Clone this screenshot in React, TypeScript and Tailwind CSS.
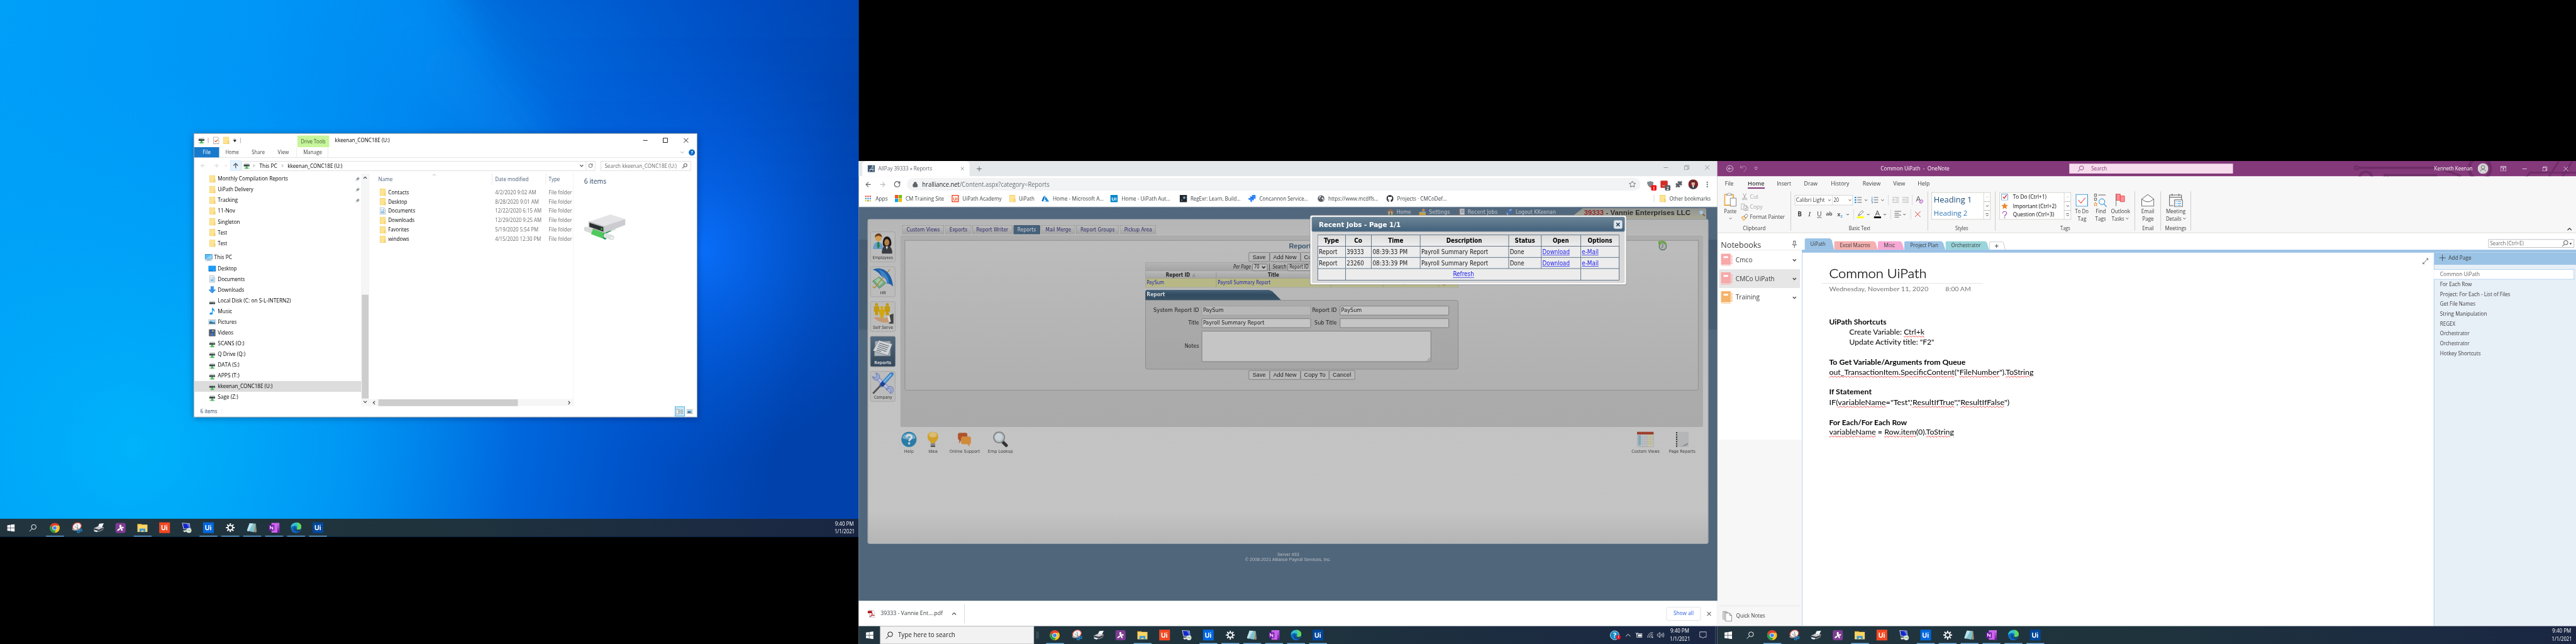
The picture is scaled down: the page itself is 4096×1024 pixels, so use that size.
import React, { useLayoutEffect, useRef, useState } from "react";
import { RotateCw, ArrowLeft, ArrowRight, Star, Puzzle, MoreVertical, Lock, Plus, X } from "lucide-react";
import { FaGithub } from "react-icons/fa";

type P = { children?: React.ReactNode; className?: string };

/** One line of text set to an exact advance width. */
function T({ w, className = "", link = false, children }: P & { w: number; link?: boolean }) {
  const outer = useRef<HTMLSpanElement>(null);
  const inner = useRef<HTMLSpanElement>(null);
  const [k, setK] = useState(1);
  useLayoutEffect(() => {
    if (outer.current && inner.current) {
      const a = outer.current.getBoundingClientRect().width;
      const b = inner.current.getBoundingClientRect().width;
      if (b > 0) setK(a / b);
    }
  }, []);
  return (
    <span ref={outer} className={"block shrink-0 whitespace-nowrap " + className} style={{ width: w }}>
      <span
        ref={inner}
        className={"inline-block origin-left whitespace-nowrap " + (link ? "text-[#1a1aee] underline decoration-1 underline-offset-[2px]" : "")}
        style={{ transform: `scaleX(${k})` }}
      >
        {children}
      </span>
    </span>
  );
}

function Chev({ className = "", w = 8, dir = "down", sw = 1.4 }: { className?: string; w?: number; dir?: "down" | "up" | "left" | "right"; sw?: number }) {
  const d = { down: "M1 3l4 4 4-4", up: "M1 7l4-4 4 4", left: "M7 1L3 5l4 4", right: "M3 1l4 4-4 4" }[dir];
  return (
    <svg width={w} height={w} viewBox="0 0 10 10" fill="none" stroke="currentColor" strokeWidth={sw} className={"shrink-0 " + className}>
      <path d={d} />
    </svg>
  );
}

/* ---------- Explorer icons ---------- */
function Folder({ className = "" }: P) {
  return (
    <svg width="14" height="16" viewBox="0 0 14 16" className={"shrink-0 " + className}>
      <rect x="0.5" y="0.5" width="12" height="15" fill="#ffe494" stroke="#f0c850" />
      <rect x="10.5" y="10" width="3" height="5.5" fill="#ffe9a2" stroke="#e3b63f" strokeWidth="0.8" />
    </svg>
  );
}
function NetDrive({ className = "" }: P) {
  return (
    <svg width="15" height="14" viewBox="0 0 15 14" className={"shrink-0 " + className}>
      <path d="M2 1h11l1 3H1z" fill="#cfd4d6" />
      <rect x="1" y="4" width="13" height="4" fill="#3c4247" />
      <rect x="10" y="5.3" width="2" height="1.2" fill="#48e06a" />
      <rect x="5.5" y="8" width="4" height="3" fill="#3fae4c" />
      <rect x="1" y="11" width="13" height="2.4" fill="#c9cfd0" />
      <rect x="4" y="10.5" width="7" height="3.2" fill="#4cc15a" />
    </svg>
  );
}
function DocIcon({ className = "" }: P) {
  return (
    <svg width="13" height="16" viewBox="0 0 13 16" className={"shrink-0 " + className}>
      <path d="M.5.5h9l3 3v12H.5z" fill="#fff" stroke="#8b8f93" />
      <path d="M2.5 5h3M7 4h3M7 6h3.5M2.5 8.5h8M2.5 10.5h8M2.5 12.5h8" stroke="#2f8fd5" />
    </svg>
  );
}
function SideIcon({ kind }: { kind: string }) {
  switch (kind) {
    case "folder":
      return <Folder />;
    case "doc":
      return <DocIcon />;
    case "drive":
      return <NetDrive className="mt-1" />;
    case "pc":
      return (
        <svg width="17" height="16" viewBox="0 0 17 16">
          <rect x="0.5" y="0.5" width="16" height="11" fill="#58bdf7" stroke="#3b6f92" />
          <path d="M1 11L16 1v10z" fill="#8fd6fb" />
          <path d="M5 13h7M1 15.2h15" stroke="#7f97a8" />
        </svg>
      );
    case "desktop":
      return (
        <svg width="17" height="13" viewBox="0 0 17 13">
          <rect x="0.5" y="0.5" width="16" height="12" fill="#1a9dfb" stroke="#0f74c4" />
          <path d="M1 11.5h15" stroke="#0a5c9e" />
          <path d="M11 11h1M13 11h1" stroke="#fff" />
        </svg>
      );
    case "down":
      return (
        <svg width="17" height="16" viewBox="0 0 17 16">
          <path d="M5.5.5h6V8h4.7L8.5 15.6.8 8h4.7z" fill="#3597ee" stroke="#1f78ca" strokeWidth="0.7" />
        </svg>
      );
    case "disk":
      return (
        <svg width="15" height="9" viewBox="0 0 15 9" className="mt-2">
          <path d="M2 1h11l1 3H1z" fill="#cfd4d6" />
          <rect x="1" y="4" width="13" height="4" fill="#3c4247" />
          <rect x="10" y="5.3" width="2" height="1.2" fill="#48e06a" />
        </svg>
      );
    case "music":
      return (
        <svg width="13" height="16" viewBox="0 0 13 16">
          <path d="M6 0h1.6c.4 3 4.6 3.8 4.4 7.5-.1 1-.5 2-1 2.5.4-2.5-1.5-4-3.4-4.6V13c0 4-7.4 3.8-7 .4C1 11.3 4 10.6 6 11.3z" fill="#1294ea" />
        </svg>
      );
    case "pic":
      return (
        <svg width="17" height="12" viewBox="0 0 17 12">
          <rect x="0.5" y="0.5" width="16" height="11" fill="#fff" stroke="#8b8f93" />
          <rect x="2" y="2" width="13" height="8" fill="#8ecdf3" />
          <path d="M2 5c4-1 8 3 13 2v3H2z" fill="#2f6f87" />
        </svg>
      );
    default:
      return (
        <svg width="15" height="16" viewBox="0 0 15 16">
          <rect width="15" height="16" fill="#3c4043" />
          <path d="M1.5 1v14M13.5 1v14" stroke="#fff" strokeDasharray="1.2 1.2" />
          <rect x="3" y="1.5" width="9" height="6" fill="#2c5fb8" />
          <rect x="3" y="8.5" width="9" height="6" fill="#2d7fd0" />
          <circle cx="9" cy="4" r="1.8" fill="#e8b73a" />
          <path d="M3.5 12l3-3 2 3z" fill="#d6412c" />
        </svg>
      );
  }
}

const sideItems: { k: string; t: string; w: number; pin?: boolean; top?: boolean; sel?: boolean }[] = [
  { k: "folder", t: "Monthly Compilation Reports", w: 157, pin: true },
  { k: "folder", t: "UiPath Delivery", w: 79.5, pin: true },
  { k: "folder", t: "Tracking", w: 44.6, pin: true },
  { k: "folder", t: "11-Nov", w: 39 },
  { k: "folder", t: "Singleton", w: 49.5 },
  { k: "folder", t: "Test", w: 21 },
  { k: "folder", t: "Test", w: 21 },
  { k: "pc", t: "This PC", w: 40, top: true },
  { k: "desktop", t: "Desktop", w: 42.5 },
  { k: "doc", t: "Documents", w: 60.6 },
  { k: "down", t: "Downloads", w: 59 },
  { k: "disk", t: "Local Disk (C: on S-L-INTERN2)", w: 163.5 },
  { k: "music", t: "Music", w: 32 },
  { k: "pic", t: "Pictures", w: 42 },
  { k: "video", t: "Videos", w: 35 },
  { k: "drive", t: "SCANS (O:)", w: 59.5 },
  { k: "drive", t: "Q Drive (Q:)", w: 61.5 },
  { k: "drive", t: "DATA (S:)", w: 48.5 },
  { k: "drive", t: "APPS (T:)", w: 48.5 },
  { k: "drive", t: "kkeenan_CONC18E (U:)", w: 122.5, sel: true },
  { k: "drive", t: "Sage (Z:)", w: 45.5 },
];

const files = [
  { t: "Contacts", w: 46.7, d: "4/2/2020 9:02 AM", dw: 92 },
  { t: "Desktop", w: 42.5, d: "8/28/2020 9:01 AM", dw: 98 },
  { t: "Documents", w: 60.5, d: "12/22/2020 6:15 AM", dw: 104, doc: true },
  { t: "Downloads", w: 59, d: "12/29/2020 9:25 AM", dw: 104 },
  { t: "Favorites", w: 46.5, d: "5/19/2020 5:54 PM", dw: 97 },
  { t: "windows", w: 47, d: "4/15/2020 12:30 PM", dw: 103 },
];

function BigDrive() {
  return (
    <svg width="96" height="60" viewBox="0 0 96 60">
      <path d="M4 33l14 5" stroke="#d6dad9" strokeWidth="10" strokeLinecap="round" />
      <path d="M48 40l20-10" stroke="#1e8e4e" strokeWidth="7" />
      <path d="M60 36l10-4" stroke="#e1e3e3" strokeWidth="6" />
      <path d="M18 38l30 11" stroke="#4fc95b" strokeWidth="14" />
      <ellipse cx="47" cy="49" rx="4.5" ry="7.5" fill="#16875a" />
      <path d="M49 48l13 4" stroke="#dfe3e2" strokeWidth="11" strokeLinecap="round" />
      <circle cx="62" cy="53" r="3.8" fill="#f3f5f4" stroke="#c3c6c6" />
      <path d="M11 17L59 1l33 10v12L45 41z" fill="#d9dadc" />
      <path d="M11 17L59 1l33 10-47 16z" fill="#e4e4e7" />
      <path d="M45 27l47-16v13L45 42z" fill="#cbccd0" />
      <path d="M10 16l35 11v15L10 29z" fill="#b9babd" />
      <path d="M12 19l31 10v10L12 28z" fill="#2d3032" />
      <circle cx="39" cy="33" r="2" fill="#24d31d" />
    </svg>
  );
}

function Explorer() {
  return (
    <div className="absolute top-[298px] left-[433px] flex h-[635px] w-[1126px] flex-col border border-[#7d8790] bg-white font-['Open_Sans','Noto_Sans',sans-serif] text-[11.5px] leading-none text-black shadow-[0_2px_14px_rgba(0,0,40,0.35)]">
      <div className="flex h-[30px] items-center">
        <NetDrive className="ml-[9px]" />
        <div className="ml-[7px] h-3 w-px bg-[#8a8a8a]" />
        <svg width="13" height="16" viewBox="0 0 13 16" className="ml-[11px]">
          <path d="M.5.5h9l3 3v12H.5z" fill="#fff" stroke="#777" />
          <path d="M3 8.5l2.5 2.5 4.5-5" stroke="#e2571e" strokeWidth="1.8" fill="none" />
        </svg>
        <Folder className="ml-[9px]" />
        <svg width="8" height="8" viewBox="0 0 8 8" className="ml-2">
          <path d="M1 1h6M1 3.5h6L4 7z" stroke="#000" strokeWidth="0.8" />
        </svg>
        <div className="ml-2 h-3 w-px bg-[#8a8a8a]" />
        <div className="mt-[4px] ml-[127px] flex h-[26px] w-[71px] items-center justify-center bg-[#c6f59b] text-[#3d5a28]">
          <T w={55}>Drive Tools</T>
        </div>
        <T w={122.5} className="ml-[13px]">kkeenan_CONC18E (U:)</T>
        <svg width="110" height="12" viewBox="0 0 110 12" className="mr-[16px] ml-auto" fill="none" stroke="#000" strokeWidth="1.2">
          <path d="M6 6h10M97 1l10 10M107 1L97 11" />
          <rect x="51" y="1" width="9.5" height="9.5" />
        </svg>
      </div>
      <div className="flex h-[24px] items-center border-b border-[#dadbdc] text-[#444]">
        <div className="flex h-[23px] w-[56px] items-center justify-center bg-[#1979ca] text-white">
          <T w={18}>File</T>
        </div>
        <T w={30} className="ml-[14px]">Home</T>
        <T w={29} className="ml-[29px]">Share</T>
        <T w={25} className="ml-[29px]">View</T>
        <div className="ml-[17px] flex h-[23px] w-[71px] items-center justify-center border-x border-[#e2e3e4]">
          <T w={42}>Manage</T>
        </div>
        <Chev className="ml-auto text-[#9a9a9a]" w={9} />
        <div className="mr-1 ml-[10px] flex h-[14px] w-[14px] items-center justify-center rounded-full bg-[#0a68c4] text-[10px] font-bold text-white">?</div>
      </div>
      <div className="flex h-[35px] items-center">
        <ArrowLeft size={13} color="#c4c4c4" className="ml-[13px]" />
        <ArrowRight size={13} color="#c4c4c4" className="ml-[17px]" />
        <Chev className="ml-[12px] text-[#c4c4c4]" w={7} />
        <div className="ml-[6px] flex h-[23px] w-[24px] items-center justify-center border border-[#cce8ff] bg-[#e5f3ff]">
          <svg width="12" height="13" viewBox="0 0 12 13" fill="none" stroke="#555" strokeWidth="1.8">
            <path d="M6 12V1.5M1 6.5l5-5 5 5" />
          </svg>
        </div>
        <div className="ml-[1px] flex h-[22px] w-[791px] items-center border border-[#d4d4d4]">
          <NetDrive className="ml-[3px]" />
          <Chev dir="right" w={7} className="ml-[5px] text-[#555]" />
          <T w={40} className="ml-[9px]">This PC</T>
          <Chev dir="right" w={7} className="ml-[8px] text-[#555]" />
          <T w={122.5} className="ml-[8px]">kkeenan_CONC18E (U:)</T>
          <Chev w={9} sw={2} className="ml-auto text-[#666]" />
          <div className="mr-[4px] ml-[5px] h-[20px] w-px bg-[#d9d9d9]" />
          <RotateCw size={11} color="#555" strokeWidth={2.6} className="mr-[4px]" />
        </div>
        <div className="ml-[12px] flex h-[22px] w-[202px] items-center border border-[#d4d4d4] text-[#6d6d6d]">
          <T w={161} className="ml-[8px]">Search kkeenan_CONC18E (U:)</T>
          <svg width="12" height="12" viewBox="0 0 12 12" fill="none" stroke="#666" strokeWidth="1.6" className="ml-[12px]">
            <circle cx="7.5" cy="4.5" r="3.5" />
            <path d="M5 7L.8 11.2" />
          </svg>
        </div>
      </div>
      <div className="flex h-[520px]">
        <div className="flex w-[374px] flex-col">
          {sideItems.map((s, i) => (
            <React.Fragment key={i}>
              {s.top && <div className="h-[8px] shrink-0" />}
              <div className={"flex h-[24px] shrink-0 items-center " + (s.sel ? "bg-[#dcdcdc]" : "")}>
                <div className={"flex w-[19px] items-center justify-center " + (s.top ? "ml-[23px]" : "ml-[31px]")}>
                  <SideIcon kind={s.k} />
                </div>
                <T w={s.w} className="ml-[3px]">{s.t}</T>
                {s.pin && (
                  <svg width="11" height="11" viewBox="0 0 11 11" className="mr-[3px] ml-auto">
                    <path d="M6.5.5l4 4-2.3 1L6.5 9 4.8 7.2.5 10.7 3.7 6.2 2 4.5l3.5-1.7z" fill="#8d9aa0" />
                  </svg>
                )}
              </div>
            </React.Fragment>
          ))}
        </div>
        <div className="flex w-[17px] flex-col items-center justify-between border-x border-[#f0f0f0] bg-[#f6f6f6] py-[5px] text-[#505050]">
          <Chev dir="up" w={9} sw={2} />
          <div className="mt-[253px] h-[232px] w-[15px] bg-[#cdcdcd]" />
          <Chev w={9} sw={2} />
        </div>
        <div className="flex w-[457px] flex-col border-r border-[#eeeeee]">
          <Chev dir="up" w={8} sw={1} className="absolute mt-[-1px] ml-[142px] text-[#777]" />
          <div className="flex h-[25px] items-center text-[#4c607a]">
            <T w={32} className="ml-[21px]">Name</T>
            <div className="ml-[222px] h-full w-px bg-[#e0e0e0]" />
            <T w={75} className="ml-[6px]">Date modified</T>
            <div className="ml-[38px] h-full w-px bg-[#e0e0e0]" />
            <T w={25} className="ml-[6px]">Type</T>
          </div>
          <div className="mt-[6px] flex flex-col text-[#6d6d6d]">
            {files.map((f) => (
              <div key={f.t} className="flex h-[21px] items-center">
                <div className="flex w-[275px] items-center pl-[24px] text-black">
                  {f.doc ? <DocIcon className="mr-px" /> : <Folder />}
                  <T w={f.w} className="ml-[5px]">{f.t}</T>
                </div>
                <div className="w-[120px] pl-[7px]">
                  <T w={f.dw}>{f.d}</T>
                </div>
                <T w={52} className="ml-[7px]">File folder</T>
              </div>
            ))}
          </div>
          <div className="mt-auto flex h-[16px] items-center bg-[#f6f6f6] pr-[4px] pl-[7px] text-[#505050]">
            <Chev dir="left" w={9} sw={2} />
            <div className="ml-[5px] h-[15px] w-[312px] bg-[#cdcdcd]" />
            <Chev dir="right" w={9} sw={2} className="ml-auto" />
          </div>
        </div>
        <div className="flex flex-col pt-[11px] pl-[24px]">
          <T w={50} className="text-[14.5px] text-[#1e395b]">6 items</T>
          <div className="mt-[65px]"><BigDrive /></div>
        </div>
      </div>
      <div className="flex h-[24px] items-center text-[#1e395b]">
        <T w={38} className="ml-[14px]">6 items</T>
        <div className="ml-[10px] h-3 w-px bg-[#e5e5e5]" />
        <div className="mr-[4px] ml-auto flex h-[22px] w-[22px] items-center justify-center border border-[#26a0da] bg-[#cbe8f6]">
          <svg width="16" height="13" viewBox="0 0 16 13">
            <rect x="0.5" y="0.5" width="4" height="12" fill="#fff" stroke="#888" strokeWidth="0.8" />
            <path d="M2 3h1.2M2 10h1.2" stroke="#c44" />
            <path d="M6 3h4M11 3h4.5M6 6.5h4M11 6.5h4.5M6 10h4M11 10h4.5" stroke="#666" />
          </svg>
        </div>
        <svg width="14" height="11" viewBox="0 0 17 12" className="mr-[9px]">
          <rect x="0.5" y="0.5" width="16" height="11" fill="#fff" stroke="#777" />
          <rect x="3" y="3" width="11" height="6" fill="#5fb0e6" />
          <path d="M3 6l11 2v1H3z" fill="#245" />
        </svg>
      </div>
    </div>
  );
}

/* ---------- Taskbar ---------- */
function WinLogo() {
  return (
    <svg width="17" height="17" viewBox="0 0 17 17" fill="#fff">
      <path d="M0 2.4L7.2 1.4V8H0zM8 1.3L17 0v8H8zM0 8.9h7.2v6.7L0 14.6zM8 8.9h9V17l-9-1.3z" />
    </svg>
  );
}
function Loupe({ color, size = 17 }: { color: string; size?: number }) {
  return (
    <svg width={size} height={size} viewBox="0 0 17 17" fill="none" stroke={color} strokeWidth="1.4">
      <circle cx="10.5" cy="6.3" r="5.3" />
      <path d="M6.8 10.3L1 16.2" />
    </svg>
  );
}
function UiTile({ className }: { className: string }) {
  return (
    <div className={"flex h-[24px] w-[24px] items-center justify-center font-['Inter',sans-serif] text-[15px] font-bold text-white " + className}>
      Ui
    </div>
  );
}
const taskIcons: { el: React.ReactNode; on?: boolean }[] = [
  {
    on: true,
    el: (
      <svg width="23" height="23" viewBox="0 0 24 24">
        <circle cx="12" cy="12" r="11.5" fill="#fbc116" />
        <path d="M2.04 6.25A11.5 11.5 0 0 1 22 6.3H12A5.7 5.7 0 0 0 7 14.8z" fill="#e33b2e" />
        <path d="M2.04 6.25l5 8.6A5.7 5.7 0 0 0 14.5 17l-2.8 6.5A11.5 11.5 0 0 1 2.04 6.25z" fill="#229c4b" />
        <circle cx="12" cy="12" r="5.4" fill="#fff" />
        <circle cx="12" cy="12" r="4.3" fill="#4286f3" />
      </svg>
    ),
  },
  {
    el: (
      <svg width="24" height="24" viewBox="0 0 24 24">
        <ellipse cx="12" cy="9" rx="10" ry="8" fill="#f2f2f2" stroke="#d24a3e" strokeWidth="1.8" transform="rotate(-25 12 9)" />
        <path d="M2 14c1 4 7 4 11 2" stroke="#aaa" strokeWidth="2.5" fill="none" />
        <path d="M7 9l10 8M12 4l3 13" stroke="#777" strokeWidth="1.2" />
        <circle cx="15" cy="20.5" r="2.5" fill="none" stroke="#1f8ad0" strokeWidth="2" />
        <circle cx="20.5" cy="17.5" r="2.5" fill="none" stroke="#1f8ad0" strokeWidth="2" />
      </svg>
    ),
  },
  {
    el: (
      <svg width="24" height="20" viewBox="0 0 24 20">
        <path d="M13 1l10-1-4 9-9-1z" fill="#f4f6f8" />
        <path d="M1 11l9-4 13 2-2 6-9 4L0 15z" fill="#c9ccd0" />
        <path d="M1 11l11 3 10-4-1 4-9 4-11-3z" fill="#3b3f43" />
        <path d="M2 15l8 2-2 3-7-2z" fill="#dfeffb" />
      </svg>
    ),
  },
  {
    el: (
      <svg width="23" height="23" viewBox="0 0 23 23">
        <rect width="23" height="23" rx="5" fill="#7f3d93" />
        <path d="M11 4c3 0 3 4 2 7 2-3 6-3 5.5 0-.3 2-3.5 1.5-5 1 2 1.5 4 5 2 6s-3.5-3-4-5c-1.5 3-5.5 6-7 4.5s3-4.5 6-5.5C9 11 8 4 11 4z" fill="#fff" />
      </svg>
    ),
  },
  {
    on: true,
    el: (
      <svg width="23" height="19" viewBox="0 0 23 19">
        <path d="M0 0h9l2 3H0z" fill="#e0a21b" />
        <rect y="2" width="23" height="16.5" fill="#fcd462" />
        <path d="M5 19v-8h13v8h-4v-4H9v4z" fill="#3b97dc" />
      </svg>
    ),
  },
  { el: <UiTile className="bg-[#f24822]" /> },
  {
    el: (
      <svg width="24" height="24" viewBox="0 0 24 24">
        <path d="M2 1l17 1 2 14-16-1z" fill="#c9cbd6" />
        <path d="M4 2.5l14 1 1.5 11-13.5-1z" fill="#1129c9" />
        <path d="M12 2.8l6 .6 1.5 11z" fill="#5b76ee" />
        <path d="M4 18l9-1 3 3-9 2z" fill="#d6d7dc" />
        <circle cx="17.5" cy="18" r="5.5" fill="#e9efe6" stroke="#aab" strokeWidth="0.6" />
        <path d="M14.5 19l2.5-2-1.5-1.5M20.5 16.5l-2 1.5 1.5 2" stroke="#2c9a31" strokeWidth="1.3" fill="none" />
      </svg>
    ),
  },
  { on: true, el: <UiTile className="bg-[#0067df]" /> },
  {
    on: true,
    el: (
      <svg width="20" height="20" viewBox="0 0 20 20" fill="none" stroke="#fff">
        <circle cx="10" cy="10" r="5.2" strokeWidth="2.6" />
        <path d="M10 0v4M10 16v4M0 10h4M16 10h4M3 3l2.6 2.6M14.4 14.4L17 17M3 17l2.6-2.6M14.4 5.6L17 3" strokeWidth="2.8" />
      </svg>
    ),
  },
  {
    on: true,
    el: (
      <svg width="23" height="22" viewBox="0 0 23 22">
        <path d="M6 2h14l2 18-4 2z" fill="#9b8f74" />
        <path d="M6 1l13 1-3 19L0 18z" fill="#7fc2cf" />
        <path d="M6 1l8 .6L4 19l-4-1z" fill="#bfe3e9" />
      </svg>
    ),
  },
  {
    on: true,
    el: (
      <svg width="24" height="22" viewBox="0 0 24 22">
        <rect x="6" width="18" height="22" rx="1" fill="#ca64ea" />
        <rect x="19" y="5.5" width="5" height="5.5" fill="#ae4bd5" />
        <rect x="19" y="11" width="5" height="5.5" fill="#9332bf" />
        <rect x="19" y="16.5" width="5" height="5.5" fill="#7719aa" />
        <rect y="5" width="12.5" height="12.5" rx="1" fill="#7719aa" />
        <path d="M3.5 14.5V8L9 14.5V8" stroke="#fff" strokeWidth="1.5" fill="none" />
      </svg>
    ),
  },
  {
    on: true,
    el: (
      <svg width="24" height="24" viewBox="0 0 24 24">
        <circle cx="12" cy="12" r="12" fill="#0f6cbf" />
        <path d="M.5 9C3-1 19-3 23 8c1.5 5-1.5 8.5-6 8.5-3.5 0-4-1.5-3-3 2-4-2-6.5-6-6C4 8 1.5 9.5.5 13z" fill="#35c1d0" />
        <path d="M12 0c9 0 13 7 12 11-1 4-4 5.5-7 5.5-3.5 0-4-1.5-3-3C16 9 18 3 12 0z" fill="#5fd95c" />
        <path d="M8.5 9.5c-5 5 0 13 9 12.3 2-.3 3.5-1.3 4.5-2.8-5 2-12 0-11-6.5z" fill="#0b4793" />
        <path d="M14.5 12.5c-1.5 2-.5 4 2.5 4 2 0 4-.5 5.5-2-.3 2-2 5-4 4.5-5 0-8-4-4-6.5z" fill="#22363f" />
      </svg>
    ),
  },
  { on: true, el: <UiTile className="bg-[#00479d]" /> },
];

function Clock() {
  return (
    <div className="flex w-[46px] flex-col items-center gap-[6.5px] text-[11.5px] leading-none text-white">
      <T w={42}>9:40 PM</T>
      <T w={45}>1/1/2021</T>
    </div>
  );
}

function Taskbar({ wide = false }: { wide?: boolean }) {
  return (
    <div className="flex h-[40px] w-full shrink-0 items-center bg-linear-to-r from-[#22353f] via-[#1f333d] to-[#1a2643] font-['Open_Sans','Noto_Sans',sans-serif]">
      <div className="flex w-[48px] items-center justify-center">
        <WinLogo />
      </div>
      {wide ? (
        <>
          <div className="flex h-[40px] w-[344px] items-center border border-[#c0c0c0] bg-[#f2f2f2] pl-[11px]">
            <Loupe color="#111" />
            <T w={128} className="ml-[11px] text-[14.5px] leading-none text-[#222]">Type here to search</T>
          </div>
          <div className="mr-[12px] ml-[6px] h-[16px] w-[4px] border-x border-[#65737a]" />
        </>
      ) : (
        <div className="flex w-[50px] items-center justify-center">
          <Loupe color="#fff" />
        </div>
      )}
      {taskIcons.map((t, i) => (
        <div key={i} className="flex h-full w-[49px] flex-col items-center">
          <div className="flex h-[38px] items-center justify-center pt-[2px]">{t.el}</div>
          {t.on && <div className="h-[2px] w-[40px] bg-[#76b9ed]" />}
        </div>
      ))}
      {wide ? (
        <div className="ml-auto flex items-center text-white">
          <div className="relative flex h-[21px] w-[21px] items-center justify-center rounded-full border border-white bg-[#1389c7] text-[15px] font-bold">
            ?
            <div className="absolute right-[-4px] bottom-0 flex h-[10px] w-[10px] items-center justify-center rounded-full bg-[#e81123] text-[8px]">!</div>
          </div>
          <Chev dir="up" w={13} sw={1} className="ml-[13px]" />
          <svg width="16" height="14" viewBox="0 0 16 14" className="ml-[10px]" fill="none" stroke="#fff">
            <rect x="3" y="4" width="11.5" height="8" />
            <rect x="6" y="6" width="7" height="4" fill="#fff" />
            <path d="M1 1v3h4V1M3 4v4" />
          </svg>
          <svg width="14" height="14" viewBox="0 0 14 14" className="ml-[10px]" fill="none" stroke="#fff">
            <path d="M1 13A12 12 0 0 1 13 1M4.5 13A8.5 8.5 0 0 1 13 4.5M8 13a5 5 0 0 1 5-5" />
            <circle cx="12" cy="12" r="1" fill="#fff" />
          </svg>
          <svg width="17" height="14" viewBox="0 0 17 14" className="ml-[8px]" fill="none" stroke="#fff">
            <path d="M.5 5H3l3.5-4v12L3 9H.5zM9 4.5q2 2.5 0 5M11.5 3q3 4 0 8M14 1.5q4 5.5 0 11" />
          </svg>
          <div className="ml-[11px]"><Clock /></div>
          <svg width="16" height="16" viewBox="0 0 16 16" className="ml-[21px]" fill="none" stroke="#fff" strokeWidth="1.1">
            <path d="M.6 1h14.8v11.5h-4.9L8 15l-2.5-2.5H.6z" />
          </svg>
          <div className="mr-[4px] ml-[19px] h-[40px] w-px bg-[#55606f]" />
        </div>
      ) : (
        <div className="mr-[9px] ml-auto"><Clock /></div>
      )}
    </div>
  );
}

function Desktop() {
  return (
    <div className="relative flex h-[1200px] w-[1920px] flex-col overflow-hidden bg-[#0070e0]">
      <svg width="1920" height="1160" viewBox="0 0 1920 1160" className="shrink-0">
        <defs>
          <linearGradient id="wp" x1="0" y1="0" x2="1" y2="0.12">
            <stop offset="0" stopColor="#009ff8" />
            <stop offset="0.3" stopColor="#0096f7" />
            <stop offset="0.5" stopColor="#0088f0" />
            <stop offset="0.7" stopColor="#0066dc" />
            <stop offset="0.85" stopColor="#0050c6" />
            <stop offset="1" stopColor="#0041ab" />
          </linearGradient>
          <radialGradient id="gl" cx="1560" cy="560" r="480" gradientUnits="userSpaceOnUse">
            <stop offset="0" stopColor="#0a72ff" stopOpacity="0.9" />
            <stop offset="1" stopColor="#0058d8" stopOpacity="0" />
          </radialGradient>
          <radialGradient id="lb" cx="300" cy="1000" r="850" gradientUnits="userSpaceOnUse">
            <stop offset="0" stopColor="#00b8fb" stopOpacity="0.85" />
            <stop offset="1" stopColor="#00a8f8" stopOpacity="0" />
          </radialGradient>
          <linearGradient id="bm" x1="1400" y1="560" x2="500" y2="0" gradientUnits="userSpaceOnUse">
            <stop offset="0" stopColor="#1aa6ff" stopOpacity="0.5" />
            <stop offset="1" stopColor="#18a0ff" stopOpacity="0" />
          </linearGradient>
          <linearGradient id="dk" x1="0" y1="0" x2="0" y2="1">
            <stop offset="0" stopColor="#0048b8" stopOpacity="0.45" />
            <stop offset="1" stopColor="#0058d0" stopOpacity="0" />
          </linearGradient>
          <filter id="soft" x="-20%" y="-20%" width="140%" height="140%">
            <feGaussianBlur stdDeviation="40" />
          </filter>
        </defs>
        <rect width="1920" height="1160" fill="url(#wp)" />
        <rect width="1920" height="1160" fill="url(#lb)" />
        <path d="M980 -100H2000V420L1300 400z" fill="url(#dk)" filter="url(#soft)" />
        <path d="M560 -60L1450 560 900 -60z" fill="url(#bm)" opacity="0.4" filter="url(#soft)" />
        <rect width="1920" height="1160" fill="url(#gl)" />
      </svg>
      <Explorer />
      <Taskbar />
    </div>
  );
}

/* ---------- Browser ---------- */
const bookmarks: { ic: React.ReactNode; t: string; w: number; gap: string; tg: string }[] = [
  {
    gap: "ml-[14px]", tg: "ml-[10px]", t: "Apps", w: 27,
    ic: (
      <svg width="14" height="14" viewBox="0 0 14 14">
        {["#e94335", "#e94335", "#e94335", "#34a853", "#4285f4", "#4285f4", "#fbbc05", "#34a853", "#fbbc05"].map((c, i) => (
          <rect key={i} x={0.5 + (i % 3) * 5} y={0.5 + Math.floor(i / 3) * 5} width="3" height="3" fill={c} />
        ))}
      </svg>
    ),
  },
  {
    gap: "ml-[16px]", tg: "ml-[8px]", t: "CM Training Site", w: 86,
    ic: (
      <svg width="16" height="16" viewBox="0 0 16 16">
        <path d="M0 0h7.5v7.5H0z" fill="#f25022" /><path d="M8.5 0H16v7.5H8.5z" fill="#7fba00" />
        <path d="M0 8.5h7.5V16H0z" fill="#00a4ef" /><path d="M8.5 8.5H16V16H8.5z" fill="#ffb900" />
      </svg>
    ),
  },
  {
    gap: "ml-[17px]", tg: "ml-[7.5px]", t: "UiPath Academy", w: 87.5,
    ic: <div className="flex h-[16px] w-[16px] items-center justify-center border-2 border-[#f24822] text-[10px] font-bold text-[#f24822]">Ui</div>,
  },
  { gap: "ml-[18px]", tg: "ml-[7px]", t: "UiPath", w: 35, ic: <Folder /> },
  {
    gap: "ml-[16px]", tg: "ml-[8px]", t: "Home - Microsoft A...", w: 114,
    ic: (
      <svg width="17" height="14" viewBox="0 0 17 14">
        <path d="M8 0L3.5 4 0 13h4z" fill="#0b6cbd" /><path d="M9 2L6.5 8l4 4.5L4 14h13z" fill="#1d8fe0" />
      </svg>
    ),
  },
  {
    gap: "ml-[15px]", tg: "ml-[9px]", t: "Home - UiPath Aut...", w: 109,
    ic: <div className="flex h-[16px] w-[16px] items-center justify-center bg-[#0085ca] text-[11px] font-bold text-white">Ui</div>,
  },
  {
    gap: "ml-[21px]", tg: "ml-[8px]", t: "RegExr: Learn, Build...", w: 112,
    ic: <div className="flex h-[16px] w-[16px] items-center justify-center bg-[#222629] text-[13px] font-bold text-[#7cc7f5]">.*</div>,
  },
  {
    gap: "ml-[17px]", tg: "ml-[8px]", t: "Concannon Service...", w: 109,
    ic: (
      <svg width="17" height="16" viewBox="0 0 17 16">
        <path d="M8 0h8.5v9C13 9 12.5 6 12.5 4 10 4 8 3 8 0z" fill="#2684ff" />
        <path d="M4 3.5h8.5v8.8C9 12.3 8.5 9.5 8.5 7.5 6 7.5 4 6.5 4 3.5z" fill="#1f6fe5" />
        <path d="M0 7h8.5v9C5 16 4.5 13 4.5 11 2 11 0 10 0 7z" fill="#2684ff" />
      </svg>
    ),
  },
  {
    gap: "ml-[21px]", tg: "ml-[8px]", t: "https://www.mcdffs...", w: 112,
    ic: (
      <svg width="16" height="16" viewBox="0 0 16 16">
        <circle cx="8" cy="8" r="7.5" fill="#5f6368" />
        <path d="M6 1.5l2 2-3 2.5 1 2-3-1M11 5l-2 3 3 1-1 4 3-4z" fill="#fff" />
      </svg>
    ),
  },
  { gap: "ml-[18px]", tg: "ml-[8px]", t: "Projects · CMCoDef...", w: 111, ic: <FaGithub size={16} color="#24292e" /> },
];

const siteTabs = [
  { t: "Custom Views", w: 74.5, b: "w-[94px]" },
  { t: "Exports", w: 40, b: "w-[59px]" },
  { t: "Report Writer", w: 71.5, b: "w-[90px]" },
  { t: "Reports", w: 41.5, b: "w-[60px]", on: true },
  { t: "Mail Merge", w: 57, b: "w-[76px]" },
  { t: "Report Groups", w: 76.5, b: "w-[96px]" },
  { t: "Pickup Area", w: 62, b: "w-[81px]" },
];

function PageIcon({ kind }: { kind: string }) {
  switch (kind) {
    case "Employees":
      return (
        <svg width="46" height="48" viewBox="0 0 46 48">
          <path d="M1 36c0-9 4-16 11-16s12 7 12 16z" fill="#6d9cc8" />
          <path d="M11 20h4l1 10-3 6-3-6z" fill="#1f8350" />
          <circle cx="13" cy="11" r="7.5" fill="#d39d55" />
          <path d="M5 10c0-12 17-12 16 0-3-5-12-5-16 0z" fill="#6b3d1a" />
          <path d="M21 46c-1-12 4-18 11-18s13 6 12 18z" fill="#3a3d42" />
          <path d="M29 28h6l-3 9z" fill="#e8e8e8" />
          <path d="M23 26c-2-24 20-24 19-1l-2 5H25z" fill="#1d1a1c" />
          <ellipse cx="32" cy="21" rx="5.5" ry="7.5" fill="#b98046" />
        </svg>
      );
    case "HR":
      return (
        <svg width="48" height="48" viewBox="0 0 48 48">
          <path d="M1 30l15-10 15 14-15 12z" fill="#74a883" stroke="#4a7a58" />
          <path d="M6 28l9-6 10 10-9 8z" fill="#9cc5a5" />
          <path d="M40 3L8 42c-2 4-6 3-6-1" fill="none" stroke="#b58431" strokeWidth="2" />
          <path d="M1 4C18-4 44 4 47 42 42 36 36 34 33 35 34 26 27 20 21 19 15 10 8 6 1 4z" fill="#1f5fa6" />
          <path d="M14 4c12 2 22 12 24 30-3-1-4 0-5 1 1-9-6-15-12-16C20 12 18 8 14 4z" fill="#3f83c6" />
        </svg>
      );
    case "Self Serve":
      return (
        <svg width="48" height="48" viewBox="0 0 48 48">
          {[{ x: 10, y: 4 }, { x: 34, y: 4 }, { x: 22, y: 11 }].map((p, i) => (
            <g key={i} fill={i === 2 ? "#d3a50e" : "#c39a12"}>
              <circle cx={p.x} cy={p.y} r="3.6" />
              <path d={`M${p.x - 6} ${p.y + 4}h12v12h-2.5v8h-7v-8h-2.5z`} />
            </g>
          ))}
          <path d="M3 34c12-4 18 0 24 1l12-5 3 12c-10 4-20 2-26 0z" fill="#c59a72" />
          <path d="M38 28l10-4v23H38z" fill="#444" />
          <path d="M34 31l5-3 3 14-4 2z" fill="#d8d8d8" />
        </svg>
      );
    case "Reports":
      return (
        <svg width="46" height="38" viewBox="0 0 46 38">
          <path d="M6 3h34v33H4z" fill="#aeb4ba" stroke="#78818a" />
          <path d="M14 1l30 8-9 26L1 24z" fill="#d2d5d8" stroke="#6c757e" />
          <path d="M15 7l22 7M13 11l22 7M12 15l21 7M10 19l21 7M9 23l10 3" stroke="#4c555e" strokeWidth="1.4" />
        </svg>
      );
    default:
      return (
        <svg width="48" height="48" viewBox="0 0 48 48">
          <path d="M6 6L42 42" stroke="#5d6ea6" strokeWidth="8" />
          <path d="M6 6L42 42" stroke="#b7c0dc" strokeWidth="6" />
          <path d="M8 1a8 8 0 1 1-7 8l5 3 5-4zM40 47a8 8 0 1 0-8-8l6-3 4 5z" fill="#9ea9cf" stroke="#5064a0" />
          <path d="M21 28L44 3" stroke="#3e7fc0" strokeWidth="9" strokeLinecap="round" />
          <path d="M24 24L43 4" stroke="#79b3e0" strokeWidth="4" />
          <path d="M22 26L2 47" stroke="#555" strokeWidth="4" />
          <path d="M23 19l7 7-6 6-6-6z" fill="#1f3f9c" />
        </svg>
      );
  }
}
const modules = [
  { t: "Employees", w: 46 }, { t: "HR", w: 13 }, { t: "Self Serve", w: 45 }, { t: "Reports", w: 38, on: true }, { t: "Company", w: 41 },
];

function Btn({ children, w, className }: { children: string; w: number; className: string }) {
  return (
    <div className={"flex h-[21px] items-center justify-center rounded-[2px] border border-[#6f6f6f] bg-[#b9b9b9] font-['Liberation_Sans',sans-serif] text-[13px] text-[#1c1c1c] " + className}>
      <T w={w}>{children}</T>
    </div>
  );
}
const foot: { t: string; w: number; ic: React.ReactNode; box: string }[] = [
  {
    t: "Help", w: 21, box: "w-[38px]",
    ic: (
      <svg width="35" height="35" viewBox="0 0 35 35">
        <circle cx="17.5" cy="17.5" r="17" fill="#2a7ba6" />
        <path d="M2 14a16 14 0 0 1 31 0c-8 5-23 5-31 0z" fill="#6fa9c6" />
        <path d="M12 13c0-7 11.5-7 11.5-.5 0 4.5-5.5 4-5.5 9" stroke="#e0e0e0" strokeWidth="3.8" fill="none" />
        <circle cx="17.8" cy="26.5" r="2.4" fill="#e0e0e0" />
      </svg>
    ),
  },
  {
    t: "Idea", w: 20.5, box: "w-[60px] ml-[5px]",
    ic: (
      <svg width="26" height="35" viewBox="0 0 26 35">
        <path d="M13 .5C27 .5 28 15 20 22c-2 2-2 3-2 4H8c0-1 0-2-2-4C-2 15-1 .5 13 .5z" fill="#cfa02b" />
        <ellipse cx="13" cy="7" rx="9" ry="6" fill="#d9bd74" />
        <rect x="8" y="26" width="10" height="7" rx="2" fill="#85888b" />
        <rect x="8" y="32" width="10" height="2" fill="#333" />
      </svg>
    ),
  },
  {
    t: "Online Support", w: 68, box: "w-[80px] ml-[1px]",
    ic: (
      <svg width="34" height="35" viewBox="0 0 34 35">
        <path d="M5 3h14a4 4 0 0 1 4 4v12H9l-4 8v-8a4 4 0 0 1-3-4V7a4 4 0 0 1 3-4z" fill="#b0522c" />
        <path d="M13 11h14a4 4 0 0 1 4 4v9a4 4 0 0 1-3 4v6l-5-6H13a4 4 0 0 1-4-4v-9a4 4 0 0 1 4-4z" fill="#d08a3c" />
      </svg>
    ),
  },
  {
    t: "Emp Lookup", w: 56, box: "w-[80px]",
    ic: (
      <svg width="36" height="35" viewBox="0 0 36 35">
        <path d="M22 22l9 9" stroke="#333" strokeWidth="7" strokeLinecap="round" />
        <circle cx="15" cy="13" r="12" fill="#b9c3c8" stroke="#858585" strokeWidth="2.8" />
        <circle cx="14" cy="12" r="8" fill="#c8d2d7" />
      </svg>
    ),
  },
];

function Field({ w, t, className = "", dim }: { w?: number; t?: string; className?: string; dim?: boolean }) {
  return (
    <div className={"flex h-[21px] w-[244px] items-center rounded-[2px] border pl-[2px] " + (dim ? "border-[#9b9b9b] bg-[#b8b8b8] " : "border-[#6b6b6b] bg-[#c5c5c5] ") + className}>
      {t && <T w={w ?? 40}>{t}</T>}
    </div>
  );
}

const jobs = [
  ["Report", "39333", "08:39:33 PM"],
  ["Report", "23260", "08:33:39 PM"],
];
const jobHead: [string, number, string][] = [
  ["Type", 34, "w-[62px]"], ["Co", 18, "w-[58px]"], ["Time", 34, "w-[109px]"], ["Description", 80, "w-[198px]"], ["Status", 45.5, "w-[73px]"], ["Open", 36, "w-[88px]"], ["Options", 55, "w-[85px]"],
];
function Cell({ children, className }: P) {
  return <div className={"flex h-full shrink-0 items-center border-r border-[#2c4a66] pt-[1px] pl-[2.5px] " + className}>{children}</div>;
}
function RecentJobs() {
  return (
    <div className="absolute top-[122px] left-[1010px] flex h-[154px] w-[706px] flex-col rounded-[4px] border-[3px] border-white bg-[#d8d8d8] font-['DejaVu_Sans_Condensed','DejaVu_Sans',sans-serif] leading-none shadow-[0_0_2px_#888]">
      <div className="flex h-[33px] items-center rounded-[3px] border border-[#38566f] bg-linear-to-b from-[#698296] via-[#587388] to-[#41617c] pr-[4px] pl-[15px]">
        <T w={183} className="text-[14px] font-bold text-white">Recent Jobs - Page 1/1</T>
        <div className="ml-auto flex h-[20px] w-[20px] items-center justify-center rounded-[4px] border border-[#aab9c6] bg-[#dfe5ea]">
          <X size={12} strokeWidth={4.5} color="#2c4a66" />
        </div>
      </div>
      <div className="mx-auto mt-[7px] flex w-[675px] flex-col border border-[#2c4a66] bg-[#ececec] text-[13.5px] text-[#222]">
        <div className="flex h-[25px] border-b-[1.5px] border-[#2c4a66] bg-linear-to-b from-[#dcdcdc] to-[#eeeeee] font-bold text-black">
          {jobHead.map(([t, w, c], i) => (
            <div key={t} className={"flex h-full shrink-0 items-center justify-center pt-[1px] " + (i < 6 ? "border-r border-[#2c4a66] " : "") + c}>
              <T w={w}>{t}</T>
            </div>
          ))}
        </div>
        {jobs.map((j) => (
          <div key={j[1]} className="flex h-[25px] border-b-[1.5px] border-[#2c4a66]">
            <Cell className="w-[62px]"><T w={41.5}>{j[0]}</T></Cell>
            <Cell className="w-[58px]"><T w={39}>{j[1]}</T></Cell>
            <Cell className="w-[109px]"><T w={78.5}>{j[2]}</T></Cell>
            <Cell className="w-[198px]"><T w={149.5}>Payroll Summary Report</T></Cell>
            <Cell className="w-[73px]"><T w={32}>Done</T></Cell>
            <Cell className="w-[88px]"><T link w={61}>Download</T></Cell>
            <div className="flex items-center pt-[1px] pl-[2.5px]"><T link w={37.5}>e-Mail</T></div>
          </div>
        ))}
        <div className="flex h-[25px]">
          <Cell className="w-[62px]" />
          <Cell className="w-[526px] justify-center"><T link w={47}>Refresh</T></Cell>
        </div>
      </div>
    </div>
  );
}

function NavItem({ t, w, ic, className = "" }: { t: string; w: number; ic: React.ReactNode; className?: string }) {
  return (
    <div className={"flex items-center text-[12px] text-[#c2c7cb] " + className}>
      <div className="mr-[6px] flex w-[16px] justify-center">{ic}</div>
      <T w={w}>{t}</T>
    </div>
  );
}

function PayrollPage() {
  return (
    <div className="flex h-[880px] flex-col bg-[linear-gradient(to_bottom,#52687e_0,#50667b_73px,#465b70_73px,#475d72_274px,#50667b_274px,#50667b_100%)] font-['DejaVu_Sans_Condensed','DejaVu_Sans',sans-serif] leading-none">
      <div className="flex h-[27px] pl-[1181px]">
        <div className="flex h-[21px] items-center">
          <NavItem t="Home" w={32} ic={<svg width="16" height="15" viewBox="0 0 16 15"><path d="M3 7h10v7.5H3z" fill="#b9ab8b" /><path d="M8 1l8 7.5-1.5 1L8 3.5 1.5 9.5 0 8.5z" fill="#c06a2c" /><path d="M6.5 9h3v5.5h-3z" fill="#555" /><path d="M1 12h3v2.5H1zM12 12h3v2.5h-3z" fill="#4f8a36" /></svg>} />
          <NavItem className="ml-[18px]" t="Settings" w={47} ic={<svg width="16" height="16" viewBox="0 0 16 16"><circle cx="10" cy="3.5" r="3" fill="#c28a55" /><path d="M5 7h10v5H5z" fill="#7da0c0" /><path d="M0 8h5l1 2h9v5.5H0z" fill="#c99c3c" /></svg>} />
          <NavItem className="ml-[18px]" t="Recent Jobs" w={66.5} ic={<svg width="15" height="15" viewBox="0 0 15 15"><rect x="2" y="0.5" width="12" height="14" fill="#bfc6cc" stroke="#777" /><path d="M3 .5v14" stroke="#a4572b" strokeWidth="2" strokeDasharray="1.5 1" /><path d="M6 4h6M6 6.5h6M6 9h6" stroke="#4f6f9c" /></svg>} />
          <NavItem className="ml-[18px]" t="Logout KKeenan" w={90} ic={<svg width="16" height="16" viewBox="0 0 16 16"><path d="M4 3l6-3 5 3-3 8-5 3-4-5z" fill="#4a6fa5" /><path d="M8 5l5-3M2 10l3 5" stroke="#9db4d2" strokeWidth="2" /></svg>} />
        </div>
        <div className="mt-[2px] ml-[39px] flex h-[25px] w-[298px] items-center rounded-tr-[5px] bg-linear-to-b from-[#8f9290] to-[#aaa896] pb-[3px] pl-[24px] font-['Liberation_Sans',sans-serif] text-[16px] font-bold [clip-path:polygon(22px_0,100%_0,100%_100%,0_100%,0_70%)]">
          <T w={44} className="text-[#8f2525]">39333</T>
          <T w={189} className="ml-[5px] text-[#2e2e2e]">- Vannie Enterprises LLC</T>
          <svg width="15" height="15" viewBox="0 0 15 15" className="ml-[18px]"><path d="M9 9l5 5" stroke="#7a5a3a" strokeWidth="2.5" /><circle cx="6" cy="6" r="4.8" fill="#a9c3da" stroke="#8696a4" /></svg>
        </div>
      </div>
      <div className="ml-[20px] flex h-[726px] w-[1880px] rounded-[4px] border border-[#c6c8c9] bg-[linear-gradient(to_bottom,#b6b6b6_0,#bdbdbd_120px,#c3c3c3_440px,#c4c4c4_90%,#b5b5b5_100%)]">
        <div className="flex w-[72px] shrink-0 flex-col gap-[10px] pt-[27px] pl-[5px]">
          {modules.map((m) => (
            <div key={m.t} className={"flex h-[68px] w-[56px] shrink-0 flex-col items-center justify-end rounded-[3px] border pb-[4px] text-[10.5px] " + (m.on ? "border-[#33475a] bg-linear-to-b from-[#53697d] to-[#33475a] font-bold text-[#d0d3d6]" : "border-[#9d9d9d] bg-[#bcbcbc] text-[#333]")}>
              <div className="flex h-[49px] items-center"><PageIcon kind={m.t} /></div>
              <T w={m.w} className="mt-[1px]">{m.t}</T>
            </div>
          ))}
        </div>
        <div className="flex w-[1795px] flex-col">
          <div className="mt-[12px] flex h-[22px] gap-[2px] pl-[4px]">
            {siteTabs.map((s) => (
              <div key={s.t} className={"flex h-[21px] items-center justify-center rounded-t-[4px] border border-b-0 text-[12.5px] " + s.b + (s.on ? " border-[#3c5468] bg-[#47617a] text-[#ccd3d9]" : " border-[#8d8d8d] bg-linear-to-b from-[#bcbcbc] to-[#a3a3a3] text-[#2e2d6d]")}>
                <T w={s.w}>{s.t}</T>
              </div>
            ))}
          </div>
          <div className="flex h-[430px] flex-col rounded-[4px] border-t border-[#c8c8c8] bg-linear-to-b from-[#adadad] to-[#aaaaaa]">
            <div className="relative mt-[11px] ml-[10px] flex h-[336px] w-[1775px] flex-col items-center rounded-b-[4px] border border-[#868686] bg-linear-to-b from-[#bcbcbc] to-[#b0b0b0]">
              <svg width="20" height="23" viewBox="0 0 20 23" className="absolute top-0 right-[69px]">
                <circle cx="10" cy="13" r="8" fill="#aeb4b4" stroke="#5d7463" strokeWidth="2" />
                <path d="M1 7c2-7 14-8 17 3" fill="none" stroke="#6aa53b" strokeWidth="3" />
                <path d="M0 0l1 10 7-4z" fill="#6aa53b" />
                <path d="M10 8v6l-3 2" stroke="#444" fill="none" />
              </svg>
              <div className="flex h-[26px] items-center font-['Liberation_Sans',sans-serif] text-[16px] font-bold text-[#3a546c]">
                <T w={58}>Reports</T>
              </div>
              <div className="flex">
                <Btn w={29} className="w-[47px]">Save</Btn>
                <Btn w={52} className="w-[69px]">Add New</Btn>
                <Btn w={48} className="w-[64px]">Copy To</Btn>
                <Btn w={41} className="w-[58px]">Cancel</Btn>
              </div>
              <div className="mt-[2px] flex w-[700px] flex-col border border-[#9a9a9a]">
                <div className="flex h-[19px] items-center bg-linear-to-b from-[#b4b4b4] to-[#a2a2a2] text-[11px] text-[#1c1c1c]">
                  <T w={39} className="ml-[196px] italic">Per Page</T>
                  <div className="ml-[3px] flex h-[16px] w-[34px] items-center justify-between rounded-[2px] border border-[#666] bg-[#bdbdbd] px-[3px]">
                    <T w={12}>70</T>
                    <Chev w={9} sw={2.2} />
                  </div>
                  <div className="mx-[4px] h-[17px] w-px bg-[#333]" />
                  <T w={30} className="ml-[3px] italic">Search</T>
                  <div className="ml-[3px] flex h-[16px] w-[60px] items-center rounded-[2px] border border-[#666] bg-[#bdbdbd] px-[3px]">
                    <T w={43}>Report ID</T>
                  </div>
                </div>
                <div className="flex h-[15px] items-center border-t border-[#c4c4c4] bg-linear-to-b from-[#b6b6b6] to-[#a6a6a6] text-[12px] font-bold text-[#222]">
                  <div className="flex h-full w-[158px] items-center border-r border-[#8f8f8f] pl-[45px]">
                    <T w={54}>Report ID</T>
                    <svg width="7" height="7" viewBox="0 0 7 7" className="ml-[5px]"><path d="M3.5.5l3 6h-6z" fill="none" stroke="#777" /></svg>
                  </div>
                  <T w={25} className="ml-[115px]">Title</T>
                </div>
                <div className="flex h-[20px] items-center border-t border-[#9a9a9a] bg-[#b7b886] text-[11.5px] text-[#2222b0]">
                  <div className="flex h-full w-[158px] items-center border-r border-[#8f8f8f] pl-[2px]"><T w={39}>PaySum</T></div>
                  <div className="flex h-full w-[256px] items-center border-r border-[#8f8f8f] pl-[3px]"><T w={118}>Payroll Summary Report</T></div>
                  <div className="h-full w-[117px] border-r border-[#8f8f8f]" />
                  <div className="flex h-full w-[125px] items-center gap-[4px] border-r border-[#8f8f8f] pl-[31px]">
                    <div className="h-[9px] w-[7px] rounded-full border-2 border-[#4c7a3a]" />
                    <div className="h-[8px] w-[9px] border-2 border-[#55604a]" />
                  </div>
                  <div className="ml-[6px] h-[10px] w-[9px] rounded-full bg-[#a8552c]" />
                </div>
              </div>
              <div className="mt-[5px] flex h-[23px] w-[700px]">
                <div className="flex w-[304px] items-center rounded-tl-[5px] bg-linear-to-b from-[#47637b] via-[#314a5e] to-[#3a5468] pl-[3px] text-[12.5px] font-bold text-[#d5d8da] [clip-path:polygon(0_0,276px_0,284px_3px,100%_100%,0_100%)]">
                  <T w={41}>Report</T>
                </div>
              </div>
              <div className="flex h-[155px] w-[700px] flex-col rounded-r-[5px] rounded-bl-[5px] border border-[#7f7f7f] bg-linear-to-b from-[#ababab] to-[#a6a6a6] pt-[12px] text-[12.5px] text-[#222]">
                <div className="flex items-center">
                  <T w={102} className="ml-[17px]">System Report ID</T>
                  <Field dim t="PaySum" w={46} className="ml-[6px]" />
                  <T w={55} className="ml-[3px]">Report ID</T>
                  <Field t="PaySum" w={46} className="ml-[7px]" />
                </div>
                <div className="mt-[7px] flex items-center">
                  <T w={24} className="ml-[95px]">Title</T>
                  <Field t="Payroll Summary Report" w={137} className="ml-[6px]" />
                  <T w={50} className="ml-[8px]">Sub Title</T>
                  <Field className="ml-[7px]" />
                </div>
                <div className="mt-[7px] flex items-center">
                  <T w={32} className="ml-[87px]">Notes</T>
                  <div className="ml-[6px] flex h-[69px] w-[513px] items-end justify-end rounded-[2px] border border-[#6b6b6b] bg-[#c5c5c5]">
                    <svg width="9" height="9" viewBox="0 0 9 9" stroke="#555"><path d="M1 8l7-7M5 8l3-3" /></svg>
                  </div>
                </div>
              </div>
              <div className="mt-[2px] flex">
                <Btn w={29} className="w-[47px]">Save</Btn>
                <Btn w={52} className="w-[69px]">Add New</Btn>
                <Btn w={48} className="w-[64px]">Copy To</Btn>
                <Btn w={41} className="w-[58px]">Cancel</Btn>
              </div>
            </div>
          </div>
          <div className="mt-[10px] flex text-[10.5px] text-[#3d3d3d]">
            {foot.map((f) => (
              <div key={f.t} className={"flex flex-col items-center gap-[3px] " + f.box}>
                {f.ic}
                <T w={f.w}>{f.t}</T>
              </div>
            ))}
            <div className="ml-auto flex w-[64px] flex-col items-center gap-[3px]">
              <svg width="38" height="35" viewBox="0 0 38 35">
                <rect x="0.5" y="1" width="37" height="33" rx="2" fill="#bfc1c2" stroke="#a3a3a3" />
                <rect x="0.5" y="0.5" width="37" height="6" fill="#9c3f2c" />
                <rect x="3" y="8" width="6" height="23" fill="#77a9bd" />
                <rect x="27" y="7" width="6" height="26" fill="#c9c48e" />
                <path d="M13 7v27M18 7v27M23 7v27M1 12h36M1 17h36M1 22h36M1 27h36" stroke="#a5a7a8" strokeWidth="0.8" />
              </svg>
              <T w={63}>Custom Views</T>
            </div>
            <div className="mr-[17px] ml-[20px] flex w-[60px] flex-col items-center gap-[3px]">
              <svg width="29" height="35" viewBox="0 0 29 35">
                <rect x="2" y="0.5" width="27" height="33.5" rx="2" fill="#b4b6b7" />
                <path d="M2 1v33" stroke="#333" strokeWidth="3" strokeDasharray="3 2" />
                <path d="M9 34c8-2 12-6 18-9v4c-5 4-10 4-18 5z" fill="#8b8d8e" />
              </svg>
              <T w={59}>Page Reports</T>
            </div>
          </div>
        </div>
      </div>
      <div className="mt-[19px] flex flex-col items-center gap-[1px] font-['Liberation_Sans',sans-serif] text-[10px] text-[#b9bec3]">
        <T w={49}>Server #33</T>
        <T w={192}>© 2008-2021 Alliance Payroll Services, Inc.</T>
      </div>
    </div>
  );
}

function Browser() {
  return (
    <div className="relative flex h-[1080px] w-[1920px] flex-col bg-white font-['Open_Sans','Noto_Sans',sans-serif] text-[11.5px] leading-none text-[#3c4043]">
      <div className="flex h-[34px] bg-[#e5e8eb] pl-[8px]">
        <div className="flex w-[240px] items-center rounded-t-[8px] bg-white pl-[12px]">
          <svg width="16" height="16" viewBox="0 0 16 16"><rect width="16" height="16" fill="#37536e" /><path d="M3 15C6 11 10 5 12 1v13M4 10h10" stroke="#dfe8ef" strokeWidth="1.3" fill="none" /></svg>
          <T w={120.5} className="ml-[8px] text-[#5f6368]">AllPay 39333 » Reports</T>
          <X size={12} color="#5f6368" className="mr-[10px] ml-auto" />
        </div>
        <div className="ml-[13px] flex items-center"><Plus size={17} color="#5f6368" strokeWidth={2} /></div>
        <div className="ml-auto flex items-center pb-[6px]">
          <div className="flex w-[46px] justify-center"><div className="h-px w-[10px] bg-[#777]" /></div>
          <svg width="11" height="11" viewBox="0 0 11 11" fill="none" stroke="#777" className="mx-[17.5px]"><path d="M.5 2.5H8v8H.5zM2.5 2.5v-2h8v8H8" /></svg>
          <div className="flex w-[46px] justify-center"><svg width="11" height="11" viewBox="0 0 11 11" stroke="#777"><path d="M.5.5l10 10M10.5.5l-10 10" /></svg></div>
        </div>
      </div>
      <div className="flex h-[36px] items-center">
        <ArrowLeft size={17} color="#5f6368" className="ml-[13px]" strokeWidth={2.2} />
        <ArrowRight size={17} color="#b8bbbe" className="ml-[15px]" strokeWidth={2.2} />
        <RotateCw size={16} color="#5f6368" className="ml-[16px]" strokeWidth={2.6} />
        <div className="ml-[14px] flex h-[28px] w-[1640px] items-center rounded-full bg-[#f1f3f4] pl-[12px]">
          <Lock size={13} color="#5f6368" fill="#5f6368" strokeWidth={2.5} />
          <T w={284.5} className="ml-[9px] text-[14px] text-[#6b6f74]"><span className="text-[#202124]">hralliance.net</span>/Content.aspx?category=Reports</T>
          <Star size={16} color="#5f6368" className="mr-[10px] ml-auto" />
        </div>
        <div className="relative ml-[15px] h-[16px] w-[14px]">
          <svg width="14" height="16" viewBox="0 0 14 16"><path d="M0 3l7-2 7 2c0 6-1 10-7 13C3 12 0 9 0 3z" fill="#84888c" /></svg>
          <div className="absolute right-[-7px] bottom-[-6px] flex h-[12px] w-[12px] items-center justify-center rounded-[2px] bg-[#f20d0d] text-[10px] font-bold text-white">!</div>
        </div>
        <div className="relative ml-[16px] flex h-[16px] w-[16px] items-center justify-center rounded-[2px] bg-[#d32d27] text-[10px] font-bold text-white">
          ...
          <div className="absolute right-[-6px] bottom-[-6px] flex h-[12px] w-[12px] items-center justify-center rounded-[2px] bg-[#555a5e] text-[9px]">2</div>
        </div>
        <Puzzle size={16} color="#5f6368" fill="#5f6368" className="ml-[17px]" />
        <svg width="22" height="22" viewBox="0 0 22 22" className="ml-[13px]">
          <circle cx="11" cy="11" r="11" fill="#7c2428" />
          <path d="M4 19c1-5 4-5 7-5s6 0 7 5c-4 4-10 4-14 0z" fill="#3b3f47" />
          <path d="M9 14h4l-2 6z" fill="#fff" />
          <ellipse cx="11" cy="9" rx="4" ry="5" fill="#e0b39b" />
          <path d="M7 8c0-6 8-6 8 0-2-2-6-2-8 0z" fill="#3b2a20" />
        </svg>
        <MoreVertical size={17} color="#5f6368" strokeWidth={2.6} className="ml-[12px]" />
      </div>
      <div className="flex h-[33px] items-center border-b border-[#c9ccd0] pb-[4px]">
        {bookmarks.map((b) => (
          <div key={b.t} className={"flex items-center " + b.gap}>
            {b.ic}
            <T w={b.w} className={b.tg}>{b.t}</T>
          </div>
        ))}
        <div className="ml-auto h-[16px] w-px bg-[#c3c6c9]" />
        <Folder className="ml-[12px]" />
        <T w={92} className="mr-[15px] ml-[8px]">Other bookmarks</T>
      </div>
      <PayrollPage />
      <div className="flex h-[57px] items-center border-t border-[#c8cbce] bg-white">
        <svg width="17" height="17" viewBox="0 0 17 17" className="ml-[20px]">
          <path d="M4 .5h8l4 4v12H4z" fill="#fff" stroke="#aaa" />
          <rect y="2" width="10" height="5" fill="#b5121b" />
          <path d="M5 15c3-2 5-6 5-8 0 4 3 5 5 5-4 0-7 1-10 3z" fill="none" stroke="#b5121b" strokeWidth="1.4" />
        </svg>
        <T w={139} className="ml-[12px] text-[12.5px]">39333 - Vannie Ent....pdf</T>
        <Chev dir="up" w={11} sw={1.8} className="ml-[20px] text-[#5f6368]" />
        <div className="ml-[17px] h-[44px] w-px bg-[#c9ccd0]" />
        <div className="ml-auto flex h-[31px] w-[77px] items-center justify-center rounded-[4px] border border-[#d5d8db] text-[12px] text-[#2a62e8]">
          <T w={45}>Show all</T>
        </div>
        <X size={15} color="#5f6368" strokeWidth={2.4} className="mr-[11px] ml-[11px]" />
      </div>
      <Taskbar wide />
      <RecentJobs />
    </div>
  );
}

/* ---------- OneNote ---------- */
const ribbonTabs: [string, number, string][] = [
  ["File", 19, "ml-[17px]"], ["Home", 37.5, "ml-[32px]"], ["Insert", 32, "ml-[27px]"], ["Draw", 30, "ml-[29px]"],
  ["History", 41, "ml-[30px]"], ["Review", 40, "ml-[30px]"], ["View", 27, "ml-[28px]"], ["Help", 27, "ml-[28px]"],
];
function Sep({ className = "" }: P) {
  return <div className={"h-[23px] w-px shrink-0 bg-[#cfcfcf] " + className} />;
}
function Group({ label, lw, className, children }: P & { label: string; lw: number }) {
  return (
    <div className={"flex h-[88px] shrink-0 flex-col items-center border-r border-[#bdbdbd] " + className}>
      <div className="flex h-[76px] w-full">{children}</div>
      <T w={lw} className="mt-[1px]">{label}</T>
    </div>
  );
}
function Lines({ kind }: { kind: string }) {
  return (
    <svg width="16" height="16" viewBox="0 0 16 16" fill="none" stroke="#444" strokeWidth="1.1" className="shrink-0">
      {kind === "bul" && <path d="M6 2.5h10M6 8h10M6 13.5h10" />}
      {kind === "bul" && <path d="M0 2.5h3.5M0 8h3.5M0 13.5h3.5" stroke="#1b87d3" strokeWidth="3" />}
      {kind === "num" && <path d="M6 2.5h10M6 8h10M6 13.5h10" />}
      {kind === "num" && <path d="M2 .5v4M.5 6.5H3L.5 9.5H3M.5 12H3v3.5H.5" stroke="#1b87d3" />}
      {(kind === "out" || kind === "in") && <path d="M0 2.5h15M8 6h7M8 10h7M0 13.5h15" stroke="#a5a5a5" />}
      {kind === "out" && <path d="M6.5 8H.5M3 5.5L.5 8 3 10.5" stroke="#a5a5a5" />}
      {kind === "in" && <path d="M0 8h6M3.5 5.5L6 8l-2.5 2.5" stroke="#a5a5a5" />}
      {kind === "al" && <path d="M0 1.5h15M0 6h10M0 10h15M0 14.5h10" />}
    </svg>
  );
}
function GalleryScroll() {
  return (
    <div className="ml-auto flex h-full w-[15px] shrink-0 flex-col border-l border-[#c4c4bc]">
      <div className="flex flex-1 items-center justify-center text-[#b5b5b5]"><Chev dir="up" w={7} /></div>
      <div className="flex flex-1 items-center justify-center border-y border-[#a9a9a9] text-[#333]"><Chev w={7} sw={1.8} /></div>
      <div className="flex flex-1 flex-col items-center justify-center text-[#333]"><div className="h-px w-[6px] bg-[#333]" /><Chev w={7} sw={1.8} /></div>
    </div>
  );
}
function BigBtn({ ic, a, aw, b, bw, chev, className = "" }: { ic: React.ReactNode; a: string; aw: number; b: string; bw: number; chev?: boolean; className?: string }) {
  return (
    <div className={"flex shrink-0 flex-col items-center " + className}>
      <div className="mt-[3px] flex h-[33px] items-center">{ic}</div>
      <T w={aw} className="mt-[3px]">{a}</T>
      <div className="mt-[4.5px] flex items-center">
        <T w={bw}>{b}</T>
        {chev && <Chev w={7} sw={1.8} className="ml-[3px]" />}
      </div>
    </div>
  );
}
const sections: [string, number, string][] = [
  ["Excel Macros", 68, "w-[98px] bg-[#f5b0b0]"],
  ["Misc", 25, "w-[59px] bg-[#f6a9d4]"],
  ["Project Plan", 63, "w-[92px] bg-[#9bc3e6]"],
  ["Orchestrator", 66, "w-[98px] bg-[#9ad5db]"],
];
const pages: [string, number][] = [
  ["For Each Row", 71], ["Project: For Each - List of Files", 157], ["Get File Names", 79], ["String Manipulation", 105],
  ["REGEX", 34], ["Orchestrator", 66], ["Orchestrator", 66], ["Hotkey Shortcuts", 91],
];
const notebooks: [string, number, string, boolean][] = [
  ["Cmco", 37.5, "#f7a8a8", false], ["CMCo UiPath", 87, "#f7a8a8", true], ["Training", 53.5, "#f5b469", false],
];
function S({ children }: P) {
  return <span className="underline decoration-[#ee2222] decoration-wavy decoration-[1px] underline-offset-[2px]">{children}</span>;
}
function Line({ w, children, className = "" }: P & { w?: number }) {
  return <div className={"flex h-[22.36px] items-center " + className}>{w ? <T w={w}>{children}</T> : null}</div>;
}

function OneNote() {
  return (
    <div className="flex h-[1080px] w-[1920px] flex-col bg-white font-['Open_Sans','Noto_Sans',sans-serif] text-[11.5px] leading-none text-[#3b3b3b]">
      <div className="relative flex h-[34px] items-center bg-[#84397b] text-white">
        <svg width="500" height="34" viewBox="0 0 500 34" className="absolute top-0 right-0" fill="none" stroke="#6f2d67" strokeWidth="5">
          <circle cx="9" cy="15" r="4" strokeWidth="3" />
          <path d="M13 15h180l50 19M80 32h110M70 32h10" />
          <circle cx="30" cy="38" r="14" strokeWidth="6" />
          <circle cx="75" cy="34" r="4" strokeWidth="3" />
          <circle cx="285" cy="17" r="24" strokeWidth="7" />
          <path d="M389 36l8-10h103M440 34L462 0M470 34L492 0" strokeWidth="4" />
        </svg>
        <svg width="16" height="16" viewBox="0 0 16 16" fill="none" stroke="#fff" className="ml-[20px]"><circle cx="8" cy="8" r="7" /><path d="M12 8H4.5M7.5 5l-3 3 3 3" /></svg>
        <svg width="15" height="16" viewBox="0 0 15 16" fill="none" stroke="#b98ab3" strokeWidth="1.3" className="ml-[15px]"><path d="M1 1v5.5h5.5M1 6.5C5 1 13 2 13.5 7c.3 3-3 5.5-5.5 8.5" /></svg>
        <svg width="9" height="8" viewBox="0 0 9 8" fill="none" stroke="#fff" className="ml-[16px]"><path d="M1 1h7M1.5 3.5l3 3 3-3" /></svg>
        <T w={154} className="ml-[274px]">Common UiPath&nbsp; -&nbsp; OneNote</T>
        <div className="ml-[268px] flex h-[22px] w-[366px] items-center bg-[#f6dcec] pl-[18px] text-[#84397b]">
          <Loupe color="#84397b" size={15} />
          <T w={35} className="ml-[16px]">Search</T>
        </div>
        <div className="relative ml-auto flex items-center">
          <T w={86}>Kenneth Keenan</T>
          <svg width="24" height="24" viewBox="0 0 24 24" className="ml-[11px]" fill="none" stroke="#444"><circle cx="12" cy="12" r="12" fill="#d5d5d5" stroke="none" /><circle cx="12" cy="9" r="4" /><path d="M6 18c1-6 11-6 12 0" /></svg>
          <svg width="13" height="12" viewBox="0 0 13 12" fill="none" stroke="#fff" className="ml-[27px]"><path d="M.5 1h12v10.5H.5zM.5 3.5h12M6.5 10V5M4.5 7l2-2 2 2" /></svg>
          <div className="ml-[36px] h-px w-[10px] bg-white" />
          <svg width="11" height="11" viewBox="0 0 11 11" fill="none" stroke="#fff" className="ml-[35px]"><path d="M.5 2.5H8v8H.5zM2.5 2.5v-2h8v8H8" /></svg>
          <svg width="11" height="11" viewBox="0 0 11 11" stroke="#fff" className="mr-[17px] ml-[36px]"><path d="M.5.5l10 10M10.5.5l-10 10" /></svg>
        </div>
      </div>
      <div className="flex h-[127px] flex-col border-b border-[#d2d0ce] bg-[#f7f7f7]">
        <div className="flex h-[34px] text-[12.5px]">
          {ribbonTabs.map(([t, w, c]) => (
            <div key={t} className={"mt-[7px] flex h-[21px] items-center " + c + (t === "Home" ? " border-b-[3px] border-[#84397b] pt-[3px] font-semibold" : "")}>
              <T w={w}>{t}</T>
            </div>
          ))}
        </div>
        <div className="relative flex h-[92px]">
          <Group label="Clipboard" lw={51} className="w-[165px]">
            <div className="flex w-[53px] flex-col items-center pl-[5px]">
              <svg width="28" height="32" viewBox="0 0 28 32" className="mt-[3px]" fill="none">
                <path d="M1 4h20v24H1z" fill="#fbe3b5" stroke="#e08e1b" strokeWidth="1.5" />
                <path d="M4 6h14v20H4z" fill="#fff" />
                <path d="M6 6V3h3c0-3.5 5-3.5 5 0h3v3z" fill="#fff" stroke="#666" />
                <path d="M14 12h13v18H14z" fill="#fff" stroke="#555" />
              </svg>
              <T w={28} className="mt-[4px]">Paste</T>
              <Chev w={7} sw={1.6} className="mt-[6px]" />
            </div>
            <div className="flex flex-col text-[#a6a6a6]">
              <div className="flex h-[23px] items-center">
                <svg width="16" height="16" viewBox="0 0 16 16" fill="none" stroke="#8a8a8a"><path d="M4.5 0l5 11M11.5 0l-5 11" /><circle cx="5" cy="13" r="2" /><circle cx="11" cy="13" r="2" /></svg>
                <T w={19} className="ml-[4px]">Cut</T>
              </div>
              <div className="flex h-[23px] items-center">
                <svg width="16" height="16" viewBox="0 0 16 16" fill="none" stroke="#8a8a8a"><path d="M6.5 15.5v-11h5l4 4v7zM11.5 4.5v4h4M4.5 13H.5V.5H7v3M9 11h4M9 13h4" /></svg>
                <T w={28} className="ml-[4px]">Copy</T>
              </div>
              <div className="flex h-[23px] items-center text-[#3b3b3b]">
                <svg width="16" height="16" viewBox="0 0 16 16" fill="none"><path d="M1 8l6-3 4 5-5 5z" fill="#fbe3b5" stroke="#e08e1b" strokeWidth="1.3" /><path d="M7 5l5-4.5L15.500 4 11 10z" fill="#fff" stroke="#444" /></svg>
                <T w={78} className="ml-[4px]">Format Painter</T>
              </div>
            </div>
          </Group>
          <Group label="Basic Text" lw={48} className="w-[306px]">
            <div className="flex flex-col pt-[7px] pl-[8px]">
              <div className="flex h-[24px] items-center">
                <div className="flex h-[23px] w-[85px] items-center justify-between border border-[#c6c6c6] bg-white pr-[3px] pl-[2px]"><T w={64}>Calibri Light</T><Chev w={7} sw={1.8} /></div>
                <div className="flex h-[23px] w-[45px] items-center justify-between border border-l-0 border-[#c6c6c6] bg-white pr-[2px] pl-[2px]"><T w={12}>20</T><Chev w={7} sw={1.8} /></div>
                <div className="ml-[4px]"><Lines kind="bul" /></div>
                <Chev w={7} sw={1.8} className="ml-[6px]" />
                <div className="ml-[8px]"><Lines kind="num" /></div>
                <Chev w={7} sw={1.8} className="ml-[6px]" />
                <Sep className="ml-[9px]" />
                <div className="ml-[8px]"><Lines kind="out" /></div>
                <div className="ml-[6px]"><Lines kind="in" /></div>
                <Sep className="ml-[6px]" />
                <svg width="17" height="18" viewBox="0 0 17 18" fill="none" className="ml-[8px]"><path d="M.5 13L5.5 1l5 12M2.5 9h6" stroke="#444" strokeWidth="1.3" /><path d="M7.5 14l5-6 4 3.5-4.5 5.500z" fill="#e8c9f0" stroke="#a33fb8" strokeWidth="1.2" /></svg>
              </div>
              <div className="mt-[8px] flex h-[24px] items-center text-[14px]">
                <div className="w-[22px] text-center font-bold">B</div>
                <div className="w-[22px] text-center font-['Liberation_Serif',serif] text-[16px] italic">I</div>
                <div className="w-[22px] text-center underline underline-offset-2">U</div>
                <div className="w-[22px] text-center text-[12px] line-through">ab</div>
                <div className="ml-[2px] w-[22px] text-center text-[13px] font-semibold">x<sub className="text-[8px] text-[#1b87d3]">2</sub></div>
                <Chev w={7} sw={1.8} className="ml-[3px]" />
                <Sep className="ml-[9px]" />
                <svg width="17" height="18" viewBox="0 0 17 18" className="ml-[7px]" fill="none"><rect y="14" width="16" height="4" fill="#ffff00" /><path d="M4 12l1.5-5L12 .8l2.5 2.7-6 6.5z" fill="#fff" stroke="#444" /><path d="M1.5 13l3-4L7 11.5z" fill="#888" /></svg>
                <Chev w={7} sw={1.8} className="ml-[5px]" />
                <svg width="16" height="18" viewBox="0 0 16 18" className="ml-[9px]" fill="none"><rect y="14" width="16" height="4" fill="#000" /><path d="M3.5 12L8 1l4.5 11M5 8.500h6" stroke="#444" strokeWidth="1.4" /></svg>
                <Chev w={7} sw={1.8} className="ml-[5px]" />
                <Sep className="ml-[9px]" />
                <div className="ml-[8px]"><Lines kind="al" /></div>
                <Chev w={7} sw={1.8} className="ml-[3px]" />
                <Sep className="ml-[10px]" />
                <svg width="14" height="14" viewBox="0 0 14 14" className="ml-[8px]" stroke="#e23b3b" strokeWidth="1.4"><path d="M1 1l12 12M13 1L1 13" /></svg>
              </div>
            </div>
          </Group>
          <Group label="Styles" lw={29} className="w-[151px]">
            <div className="mt-[2px] ml-[8px] flex h-[61px] w-[132px] border border-[#c4c4bc] bg-white pl-[4px]">
              <div className="flex flex-col pt-[7px]">
                <T w={85} className="text-[17px] text-[#1e4e79]">Heading 1</T>
                <T w={75} className="mt-[14px] text-[15.5px] text-[#2e75b5]">Heading 2</T>
              </div>
              <GalleryScroll />
            </div>
          </Group>
          <Group label="Tags" lw={22} className="w-[312px]">
            <div className="mt-[2px] ml-[9px] flex h-[61px] w-[160px] shrink-0 border border-[#c4c4bc] bg-white text-black">
              <div className="flex flex-col pl-[3px]">
                <div className="flex h-[20px] items-center"><svg width="15" height="15" viewBox="0 0 15 15" fill="none"><rect x="0.5" y="0.5" width="14" height="14" fill="#fff" stroke="#1b73b3" /><path d="M3.5 7l3 3.500L12 3" stroke="#d33" strokeWidth="2" /></svg><T w={75} className="ml-[11px]">To Do (Ctrl+1)</T></div>
                <div className="flex h-[20px] items-center"><svg width="15" height="15" viewBox="0 0 15 15"><path d="M7.5 0l2.2 5.2 5.3.4-4 3.6 1.3 5.5-4.8-3-4.8 3L4 9.2 0 5.600l5.3-.4z" fill="#f0862f" /></svg><T w={97} className="ml-[11px]">Important (Ctrl+2)</T></div>
                <div className="flex h-[20px] items-center"><svg width="15" height="16" viewBox="0 0 15 16" fill="none" stroke="#a33fb8" strokeWidth="1.6"><path d="M3 5c0-5.500 9-5.500 9 0 0 3-4.5 3-4.5 7M7.5 13.500V16" /></svg><T w={92} className="ml-[11px]">Question (Ctrl+3)</T></div>
              </div>
              <GalleryScroll />
            </div>
            <BigBtn className="ml-[8px] w-[32px]" a="To Do" aw={30} b="Tag" bw={19} ic={<svg width="28" height="28" viewBox="0 0 28 28" fill="none"><rect x="1" y="0.7" width="26" height="26.5" fill="#fff" stroke="#1b87d3" strokeWidth="1.3" /><path d="M6 13l6 7L22 8" stroke="#ee5656" strokeWidth="1.5" /></svg>} />
            <BigBtn className="ml-[11px] w-[30px]" a="Find" aw={23} b="Tags" bw={24} ic={<svg width="30" height="30" viewBox="0 0 30 30" fill="none"><path d="M1 1h5v5H1zM1 10h5v5H1zM10 3h16" stroke="#444" strokeWidth="1.2" /><path d="M3.5 19l1.2 3 3.3.2-2.5 2 1 3.2-3-1.8-2.8 1.8.9-3.2-2.5-2 3.2-.2z" stroke="#e0801b" strokeWidth="1.1" /><circle cx="18" cy="18" r="6.5" stroke="#1b87d3" strokeWidth="1.4" /><path d="M22.5 23l6 6.5" stroke="#1b87d3" strokeWidth="1.5" /></svg>} />
            <BigBtn className="ml-[7px] w-[44px]" a="Outlook" aw={43} b="Tasks" bw={28} chev ic={<svg width="22" height="29" viewBox="0 0 22 29" fill="none"><path d="M1.5 28V0" stroke="#444" /><path d="M2 1h9v14H2z" fill="#ff8d96" stroke="#d8332c" /><path d="M11 5h9.5v13H11z" fill="#ff8d96" stroke="#d8332c" /></svg>} />
          </Group>
          <Group label="Email" lw={26} className="w-[58px]">
            <BigBtn className="w-full" a="Email" aw={29} b="Page" bw={26} ic={<svg width="29" height="28" viewBox="0 0 29 28" fill="none" stroke="#444" strokeWidth="1.2"><path d="M1 11L14.5 1 28 11v16H1z" fill="#fff" /><path d="M1 11l9 6h9l9-6" /></svg>} />
          </Group>
          <Group label="Meetings" lw={48} className="w-[67px]">
            <BigBtn className="w-full" a="Meeting" aw={44} b="Details" bw={35} chev ic={<svg width="31" height="30" viewBox="0 0 31 30" fill="none" stroke="#444" strokeWidth="1.2"><path d="M10 27H1V3h27v10M1 8h27M7 0v5M22 0v5" /><rect x="12.5" y="14" width="17.5" height="15.5" fill="#fff" /><path d="M15 18h2M19 18h8M15 22h2M19 22h8M15 26h2M19 26h8" stroke="#1b87d3" /></svg>} />
          </Group>
          <Chev dir="up" w={11} sw={1.6} className="mt-auto mr-[9px] mb-[2px] ml-auto" />
        </div>
      </div>
      <div className="flex h-[879px]">
        <div className="flex w-[189px] shrink-0 flex-col">
          <div className="ml-[4px] flex h-[39px] w-[181px] items-center border-b border-[#e1e1e1] pt-[13px] pl-[4px]">
            <T w={90} className="text-[18px]">Notebooks</T>
            <svg width="11" height="17" viewBox="0 0 11 17" fill="none" stroke="#444" className="ml-[69px]"><path d="M2.5 1h6M3.5 1v6L1 9.5h9L7.5 7V1M5.5 9.5V16" strokeWidth="1.2" /></svg>
          </div>
          <div className="ml-[4px] flex w-[181px] flex-col">
            {notebooks.map(([t, w, c, sel]) => (
              <div key={t} className={"flex h-[42px] items-center pl-[4px] " + (sel ? "bg-[#e6e6e6]" : "")}>
                <svg width="26" height="28" viewBox="0 0 26 28">
                  <rect width="22" height="25" rx="1" fill={c} />
                  <path d="M0 25c0 1.500 1 2.500 3 2.500h19" stroke={c} fill="none" strokeWidth="1.2" />
                  <rect x="6" y="6" width="10" height="4" fill="#fff" />
                  <path d="M24.5 4v20" stroke={c} strokeWidth="2" strokeDasharray="6 1" />
                </svg>
                <T w={w} className="ml-[7px] text-[14.5px]">{t}</T>
                <Chev w={9} sw={2.4} className="mr-[8px] ml-auto text-[#555]" />
              </div>
            ))}
          </div>
          <div className="mt-[297px] flex flex-1 flex-col justify-end bg-[#f7f7f7]">
            <div className="ml-[4px] flex h-[46px] w-[181px] items-center border-t border-[#dedede] pl-[8px]">
              <svg width="21" height="24" viewBox="0 0 21 24" fill="none" stroke="#666"><path d="M.5 19V1h8M3.5 21V3h8" /><path d="M6.5 5h9l4.500 5v13H6.500zM15.5 5v5H20" fill="#fff" /></svg>
              <T w={65} className="ml-[9px] text-[12.5px]">Quick Notes</T>
            </div>
          </div>
        </div>
        <div className="flex flex-1 flex-col">
          <div className="flex h-[38px] items-end">
            <div className="ml-[6px] flex h-[26px] w-[66px] items-center rounded-tl-[4px] bg-[#9bc3e6] pl-[13px] [clip-path:polygon(0_0,57px_0,61px_4px,100%_100%,0_100%)]"><T w={34}>UiPath</T></div>
            {sections.map(([t, w, c]) => (
              <div key={t} className={"flex h-[20px] items-center rounded-tl-[4px] pl-[13px] [clip-path:polygon(0_0,calc(100%-9px)_0,calc(100%-5px)_4px,100%_100%,0_100%)] " + c}><T w={w}>{t}</T></div>
            ))}
            <svg width="37" height="19" viewBox="0 0 37 19" fill="none" stroke="#b5b5b5"><path d="M.5 19V4Q.5.5 4 .5h24q3 0 4 3.500l4 15" /><path d="M12.5 10h8M16.5 6v8" stroke="#444" strokeWidth="1.4" /></svg>
            <div className="mr-[4px] mb-[5px] ml-auto flex h-[19px] w-[192px] items-center border border-[#ababab] pl-[3px] text-[#666]">
              <T w={75}>Search (Ctrl+E)</T>
              <div className="mr-[2px] ml-auto"><Loupe color="#333" size={15} /></div>
              <svg width="6" height="4" viewBox="0 0 6 4" className="mr-[4px]"><path d="M0 0h6L3 4z" fill="#333" /></svg>
            </div>
          </div>
          <div className="h-[6px] border-t border-[#84aedf] bg-[#9bc3e6]" />
          <div className="flex flex-1">
            <div className="relative flex w-[1413px] flex-col border-l border-[#9bc3e6] font-['Lato',sans-serif] text-[16.4px] text-black">
              <svg width="13" height="14" viewBox="0 0 13 14" className="absolute top-[12px] right-[12px]" fill="none" stroke="#333"><path d="M8.5.8H12v4M12 .8L1 13M1 9v4.200h3.500" /></svg>
              <div className="ml-[44px] flex h-[69px] w-[360px] items-center border-b border-[#dcdcdc] pt-[21px] pl-[16px]">
                <T w={218} className="text-[28px] font-light [-webkit-text-stroke:0.4px_black]">Common UiPath</T>
              </div>
              <div className="ml-[60px] flex h-[24px] items-center text-[14.5px] text-[#767676]">
                <T w={222}>Wednesday, November 11, 2020</T>
                <T w={57} className="ml-[38px]">8:00 AM</T>
              </div>
              <div className="mt-[51px] ml-[60px] flex flex-col">
                <Line w={128} className="font-bold">UiPath Shortcuts</Line>
                <Line w={168} className="ml-[45px]">Create Variable: <S>Ctrl+k</S></Line>
                <Line w={190} className="ml-[45px]">Update Activity title: "F2"</Line>
                <Line />
                <Line w={305} className="font-bold">To Get Variable/Arguments from Queue</Line>
                <Line w={457}><S>out_TransactionItem.SpecificContent</S>("<S>FileNumber</S>").<S>ToString</S></Line>
                <Line />
                <Line w={95} className="font-bold">If Statement</Line>
                <Line w={403}>IF(<S>variableName</S>="Test",'<S>ResultIfTrue</S>","<S>ResultIfFalse</S>")</Line>
                <Line />
                <Line w={174} className="font-bold">For Each/For Each Row</Line>
                <Line w={279}><S>variableName</S> = <S>Row.item</S>(0).<S>ToString</S></Line>
              </div>
            </div>
            <div className="flex flex-1 flex-col border-l border-[#9bc3e6] bg-[#e7eff7]">
              <div className="flex h-[27px] items-center bg-[#9bc3e6] pb-[4px] pl-[11px]">
                <svg width="15" height="15" viewBox="0 0 15 15" stroke="#333" strokeWidth="1.1"><path d="M7.5 0v15M0 7.5h15" /></svg>
                <T w={51} className="ml-[6px]">Add Page</T>
              </div>
              <div className="mt-[10px] ml-[-1px] flex h-[23px] w-[314px] items-center border border-l-0 border-[#9bc3e6] bg-white pl-[14px] text-[#666]"><T w={89}>Common UiPath</T></div>
              {pages.map(([t, w], i) => (
                <div key={i} className="flex h-[22px] items-center pl-[13px]"><T w={w}>{t}</T></div>
              ))}
            </div>
          </div>
        </div>
      </div>
      <Taskbar />
    </div>
  );
}

export default function App() {
  return (
    <div className="h-[1024px] w-[4096px] overflow-hidden bg-black">
      <div className="flex h-[1440px] w-[5760px] origin-top-left scale-[0.711111] bg-black">
        <Desktop />
        <div className="mt-[360px]"><Browser /></div>
        <div className="mt-[360px]"><OneNote /></div>
      </div>
    </div>
  );
}
